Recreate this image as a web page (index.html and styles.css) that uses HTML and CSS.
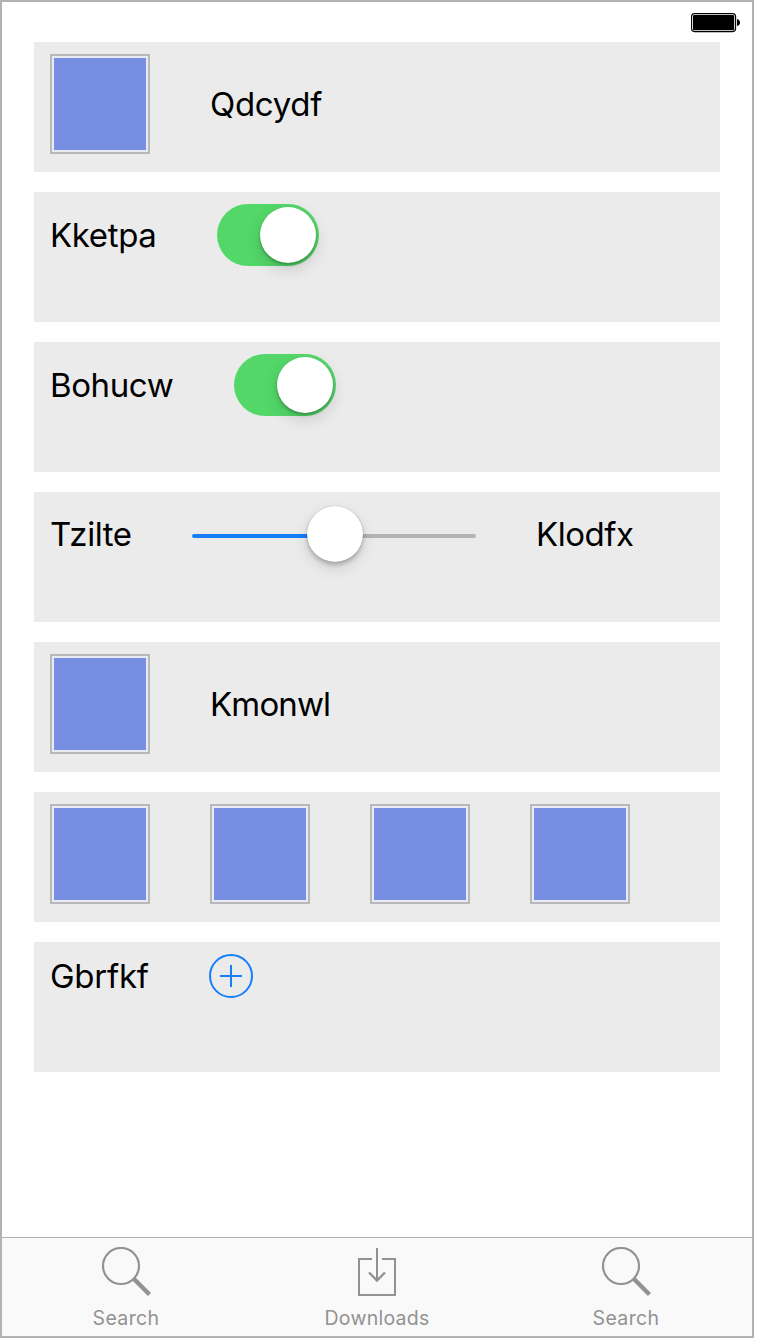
FILE: index.html
```html
<!DOCTYPE html>
<html lang="en">
<head>
<meta charset="utf-8">
<title>Controls</title>
<link rel="stylesheet" href="styles.css">
</head>
<body>
<div class="phone">
  <header class="status">
    <svg width="50" height="20" viewBox="0 0 50 20">
      <rect x="0.6" y="0.6" width="44" height="18" rx="3" fill="none" stroke="#000" stroke-width="1.1"/>
      <rect x="2" y="2" width="41.2" height="15.2" rx="1.3" fill="#000"/>
      <path d="M46 6q3 1 3 3.5t-3 3.5z" fill="#000"/>
    </svg>
  </header>
  <main class="cards">
    <section class="card"><div class="row row-swatch"><span class="swatch"></span><span class="label qd">Qdcydf</span></div></section>
    <section class="card"><div class="row row-switch"><span class="label kk">Kketpa</span><span class="switch"><span class="knob"></span></span></div></section>
    <section class="card"><div class="row row-switch"><span class="label bo">Bohucw</span><span class="switch"><span class="knob"></span></span></div></section>
    <section class="card"><div class="row row-slider"><span class="label tz">Tzilte</span><span class="slider"><span class="fill"></span><span class="rest"></span><span class="knob thumb"></span></span><span class="label kl">Klodfx</span></div></section>
    <section class="card"><div class="row row-swatch"><span class="swatch"></span><span class="label km">Kmonwl</span></div></section>
    <section class="card"><div class="row row-swatch"><span class="swatch"></span><span class="swatch"></span><span class="swatch"></span><span class="swatch"></span></div></section>
    <section class="card"><div class="row row-add"><span class="label gb">Gbrfkf</span>
      <svg width="44" height="44" viewBox="0 0 44 44" fill="none" stroke="#147efb" stroke-width="2"><circle cx="22" cy="22" r="21"/><path d="M11 22H33M22 11V33"/></svg></div></section>
  </main>
  <nav class="tabs">
    <div class="tab">
      <svg width="50" height="50" viewBox="0 0 50 50" fill="none" stroke="#929292"><circle cx="20" cy="19" r="18" stroke-width="2.2"/><path d="M32.5 31.5L48.5 47.5" stroke-width="4.4"/></svg>
      <span class="tab-label search">Search</span>
    </div>
    <div class="tab">
      <svg width="50" height="50" viewBox="0 0 50 50" fill="none" stroke="#929292" stroke-width="2"><path d="M20 12H7V48H43V12H30M25 1V34"/><path d="M17 25.5L25 33.5L33 25.5" stroke-width="2.4"/></svg>
      <span class="tab-label downloads">Downloads</span>
    </div>
    <div class="tab">
      <svg width="50" height="50" viewBox="0 0 50 50" fill="none" stroke="#929292"><circle cx="20" cy="19" r="18" stroke-width="2.2"/><path d="M32.5 31.5L48.5 47.5" stroke-width="4.4"/></svg>
      <span class="tab-label search">Search</span>
    </div>
  </nav>
</div>
</body>
</html>
```
FILE: styles.css
```css
* { box-sizing: border-box; }
body { margin: 0; background: #fff; font-family: Inter, "Liberation Sans", sans-serif; }
svg { display: block; flex: none; }
.phone { width: 754px; height: 1338px; border: 2px solid #b2b2b2; display: flex; flex-direction: column; }
.status { height: 40px; padding: 11px 11px 0 0; display: flex; justify-content: flex-end; }
.cards { flex: 1; padding: 0 32px; display: flex; flex-direction: column; gap: 20px; }
.card { height: 130px; background: #ebebeb; padding: 12px 16px; }
.row { display: flex; align-items: center; gap: 60px; }
.row-swatch { height: 100px; }
.row-switch { height: 62px; }
.row-slider { height: 60px; }
.row-add { height: 44px; }
.swatch { width: 100px; height: 100px; flex: none; border: 2px solid #b8b8b8; padding: 2px; background: #768fe2 content-box; box-shadow: inset 0 0 0 2px #e9ecf7; }
.label { font-size: 33px; line-height: 42px; color: #000; white-space: nowrap; }
.qd { letter-spacing: -0.3px; }
.kk { width: 107px; letter-spacing: -0.35px; }
.bo { width: 124px; letter-spacing: -0.4px; }
.tz { width: 82px; letter-spacing: -0.45px; }
.kl { letter-spacing: -0.45px; }
.km { letter-spacing: -0.85px; }
.gb { width: 99px; letter-spacing: -0.25px; }
.switch { width: 102px; height: 62px; border-radius: 31px; background: #53d769; display: flex; align-items: center; justify-content: flex-end; padding-right: 3px; }
.knob { width: 56px; height: 56px; border-radius: 50%; background: #fff; box-shadow: 0 6px 16px rgba(0,0,0,.15), 0 2px 3px rgba(0,0,0,.25); }
.slider { width: 284px; height: 60px; position: relative; display: flex; align-items: center; padding-top: 4px; }
.fill, .rest { height: 4px; flex: 1; background: #147efb; border-radius: 2px 0 0 2px; }
.rest { background: #b4b4b4; border-radius: 0 2px 2px 0; }
.thumb { position: absolute; left: 115px; top: 2px; box-shadow: 0 6px 16px rgba(0,0,0,.12), 0 3px 4px rgba(0,0,0,.22), 0 0 1px rgba(0,0,0,.3); }
.tabs { height: 99px; border-top: 1px solid #b2b2b2; background: #f9f9f9; display: flex; justify-content: space-between; }
.tab { width: 248px; padding-top: 9px; display: flex; flex-direction: column; align-items: center; }
.tab:last-child { padding-right: 4px; }
.tab-label { font-size: 19.5px; line-height: 24px; margin-top: 9px; color: #929292; white-space: nowrap; }
.search { letter-spacing: .35px; }
.downloads { letter-spacing: .25px; }
```
